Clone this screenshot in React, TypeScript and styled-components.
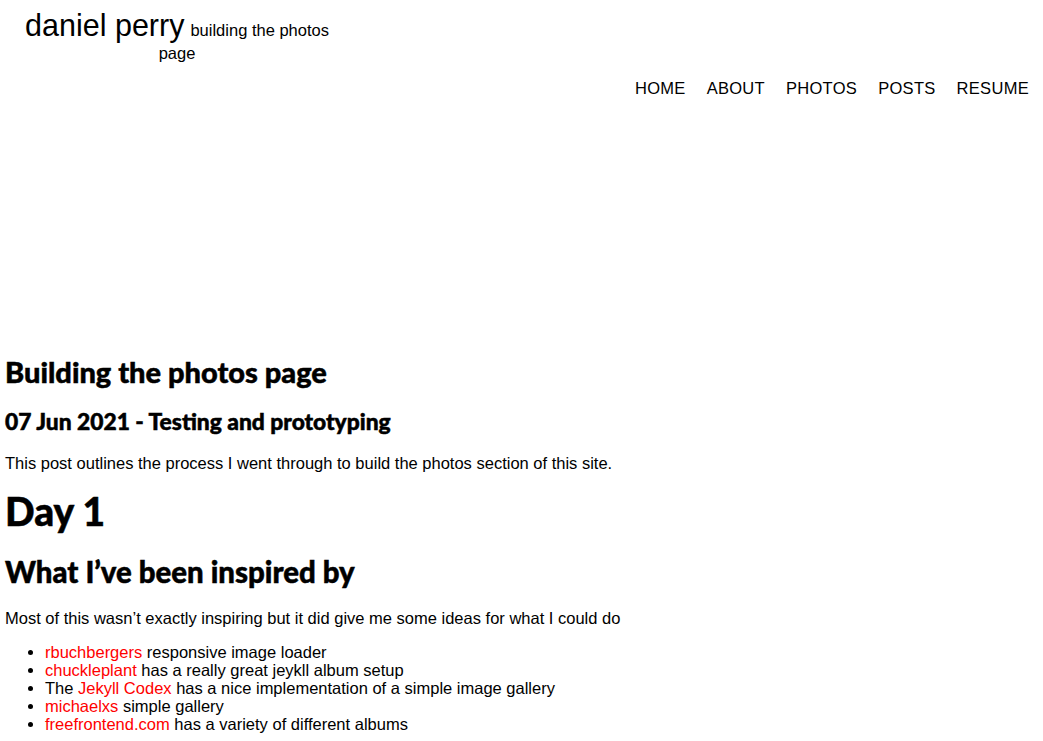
import React from "react";
import styled, { createGlobalStyle } from "styled-components";

const Global = createGlobalStyle`
  html, body { margin: 0; padding: 0; background: #fff; }
  body { font-family: "Liberation Sans", Arial, sans-serif; color: #000; }
`;

const Page = styled.div`
  padding: 0 5px;
`;

const Header = styled.header`
  display: flex;
  flex-direction: column;
`;

const Brand = styled.div`
  width: 338px;
  margin-left: 3px;
  padding-top: 14px;
  text-align: center;
  line-height: 22px;
`;

const Name = styled.span`
  font-size: 30.5px;
`;

const Tagline = styled.span`
  font-size: 16.5px;
  margin-left: 6px;
`;

const Nav = styled.nav`
  display: flex;
  justify-content: flex-end;
  gap: 21px;
  padding: 13px 9px 0 0;
  height: 277px;
`;

const NavLink = styled.a`
  font-size: 16.5px;
  letter-spacing: 0.3px;
  text-transform: uppercase;
  color: #000;
  text-decoration: none;
  line-height: 20px;
`;

const Heading = styled.h1<{ $size: number; $top: number }>`
  font-family: Lato, sans-serif;
  font-weight: 900;
  font-size: ${(p) => p.$size}px;
  line-height: 1.2;
  margin: ${(p) => p.$top}px 0 0;
  -webkit-text-stroke: 0.5px #000;
`;

const Text = styled.p<{ $top: number }>`
  font-size: 16.5px;
  margin: ${(p) => p.$top}px 0 0;
`;

const List = styled.ul`
  margin: 15px 0 0;
  padding-left: 40px;
  font-size: 16.5px;
  line-height: 18px;
`;

const Link = styled.a`
  color: #f00;
  text-decoration: none;
`;

export default function App() {
  return (
    <>
      <Global />
      <Page>
        <Header>
          <Brand>
            <Name>daniel perry</Name>
            <Tagline>building the photos page</Tagline>
          </Brand>
          <Nav>
            {["Home", "About", "Photos", "Posts", "Resume"].map((n) => (
              <NavLink key={n} href="#">{n}</NavLink>
            ))}
          </Nav>
        </Header>
        <Heading $size={29} $top={0}>Building the photos page</Heading>
        <Heading as="h2" $size={22.8} $top={18}>07 Jun 2021 - Testing and prototyping</Heading>
        <Text $top={19}>This post outlines the process I went through to build the photos section of this site.</Text>
        <Heading $size={39} $top={15}>Day 1</Heading>
        <Heading as="h2" $size={29.4} $top={19}>What I’ve been inspired by</Heading>
        <Text $top={20}>Most of this wasn’t exactly inspiring but it did give me some ideas for what I could do</Text>
        <List>
          <li><Link href="#">rbuchbergers</Link> responsive image loader</li>
          <li><Link href="#">chuckleplant</Link> has a really great jeykll album setup</li>
          <li>The <Link href="#">Jekyll Codex</Link> has a nice implementation of a simple image gallery</li>
          <li><Link href="#">michaelxs</Link> simple gallery</li>
          <li><Link href="#">freefrontend.com</Link> has a variety of different albums</li>
        </List>
      </Page>
    </>
  );
}
